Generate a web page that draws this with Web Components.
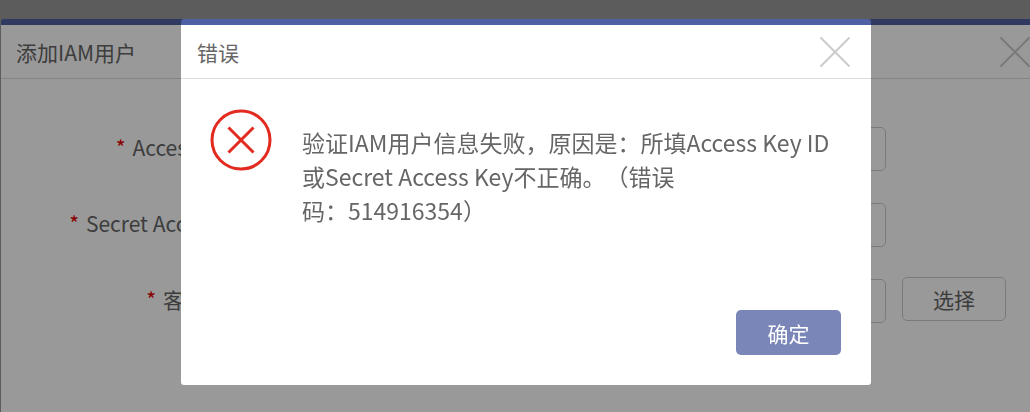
<!DOCTYPE html>
<html lang="zh-CN">
<head>
<meta charset="utf-8">
<title>添加IAM用户</title>
<style>
  html, body {
    margin: 0;
    height: 412px;
    overflow: hidden;
    background: #999;
    font-family: "Noto Sans CJK SC", "Noto Sans", sans-serif;
    color: #666;
  }
  .code { white-space: nowrap; }
</style>
</head>
<body>
<iam-dialog title-text="添加IAM用户">
  <form-row label="Access Key ID"></form-row>
  <form-row label="Secret Access Key" label-gap="5"></form-row>
  <form-row label="客户账号" label-gap="16" action="选择"></form-row>
</iam-dialog>
<error-dialog title-text="错误">
  验证IAM用户信息失败&#xFF0C;原因是&#xFF1A;所填Access Key ID或Secret Access Key不正确&#x3002;&#xFF08;错误<span class="code">码&#xFF1A;514916354&#xFF09;</span>
</error-dialog>

<script>
const closeIcon = (color) => `
  <svg width="32" height="32" viewBox="0 0 32 32" fill="none" stroke="${color}" stroke-width="2">
    <path d="M1.5 1.5 L30.5 30.5 M30.5 1.5 L1.5 30.5" />
  </svg>`;

class IamDialog extends HTMLElement {
  constructor() {
    super();
    this.attachShadow({ mode: "open" });
    this.shadowRoot.innerHTML = `
      <style>
        :host {
          display: block;
          width: 1050px;
          height: 393px;
          margin: 19px 0 0 1px;
          box-sizing: border-box;
          background: #fff;
          border-top: 6px solid #4f5fa3;
          border-radius: 3px 3px 0 0;
        }
        header {
          display: flex;
          align-items: center;
          justify-content: space-between;
          height: 53px;
          padding: 0 20px 0 15px;
          border-bottom: 1px solid #ddd;
          font-size: 21px;
          color: #666;
        }
        svg { display: block; }
        main {
          display: flex;
          flex-direction: column;
          padding-top: 48px;
          gap: 32px;
        }
      </style>
      <header><span>${this.getAttribute("title-text")}</span>${closeIcon("#ccc")}</header>
      <main><slot></slot></main>`;
  }
}

class FormRow extends HTMLElement {
  constructor() {
    super();
    this.attachShadow({ mode: "open" });
    const action = this.getAttribute("action");
    const labelGap = this.getAttribute("label-gap") || 0;
    this.shadowRoot.innerHTML = `
      <style>
        :host {
          display: grid;
          grid-template-columns: 262px 623px 120px;
          align-items: center;
          height: 44px;
          font-size: 21px;
          color: #666;
        }
        label {
          justify-self: end;
          white-space: nowrap;
          margin: -4px ${labelGap}px 0 0;
        }
        label i {
          color: #e60000;
          font-style: normal;
          margin-right: 7px;
        }
        .field {
          height: 44px;
          margin-left: 6px;
          box-sizing: border-box;
          border: 1px solid #ccc;
          border-radius: 5px;
        }
        button {
          justify-self: end;
          width: 104px;
          height: 44px;
          margin-top: -4px;
          box-sizing: border-box;
          background: #fff;
          border: 1px solid #ccc;
          border-radius: 5px;
          font: inherit;
          color: inherit;
        }
      </style>
      <label><i>*</i>${this.getAttribute("label")}</label>
      <div class="field"></div>
      ${action ? `<button>${action}</button>` : ""}`;
  }
}

class ErrorDialog extends HTMLElement {
  constructor() {
    super();
    this.attachShadow({ mode: "open" });
    this.shadowRoot.innerHTML = `
      <style>
        :host {
          position: fixed;
          inset: 0;
          display: block;
          background: rgba(0, 0, 0, 0.4);
        }
        .box {
          display: flex;
          flex-direction: column;
          width: 690px;
          height: 366px;
          margin: 19px 0 0 181px;
          box-sizing: border-box;
          background: #fff;
          border-top: 6px solid #4f5fa3;
          border-radius: 3px;
        }
        header {
          display: flex;
          align-items: center;
          justify-content: space-between;
          flex: none;
          height: 53px;
          padding: 0 20px 0 16px;
          border-bottom: 1px solid #ddd;
          font-size: 21px;
          color: #666;
        }
        svg { display: block; flex: none; }
        .content {
          flex: 1;
          display: flex;
          gap: 30px;
          padding: 30px 30px 0 29px;
        }
        .message {
          padding-top: 16px;
          font-size: 23px;
          line-height: 34px;
          color: #666;
          text-spacing-trim: space-all;
        }
        footer {
          display: flex;
          justify-content: flex-end;
          padding: 0 30px 30px 0;
        }
        button {
          width: 105px;
          height: 45px;
          background: #7a86b8;
          border: 0;
          border-radius: 5px;
          color: #fff;
          font: inherit;
          font-size: 21px;
        }
      </style>
      <div class="box">
        <header><span>${this.getAttribute("title-text")}</span>${closeIcon("#ccc")}</header>
        <div class="content">
          <svg width="62" height="62" viewBox="0 0 62 62" fill="none" stroke="#e32a1f">
            <circle cx="31" cy="31" r="29" stroke-width="3" />
            <path d="M18.5 18.5 L43.5 43.5 M43.5 18.5 L18.5 43.5" stroke-width="3" />
          </svg>
          <div class="message"><slot></slot></div>
        </div>
        <footer><button>确定</button></footer>
      </div>`;
  }
}

customElements.define("iam-dialog", IamDialog);
customElements.define("form-row", FormRow);
customElements.define("error-dialog", ErrorDialog);
</script>
</body>
</html>
